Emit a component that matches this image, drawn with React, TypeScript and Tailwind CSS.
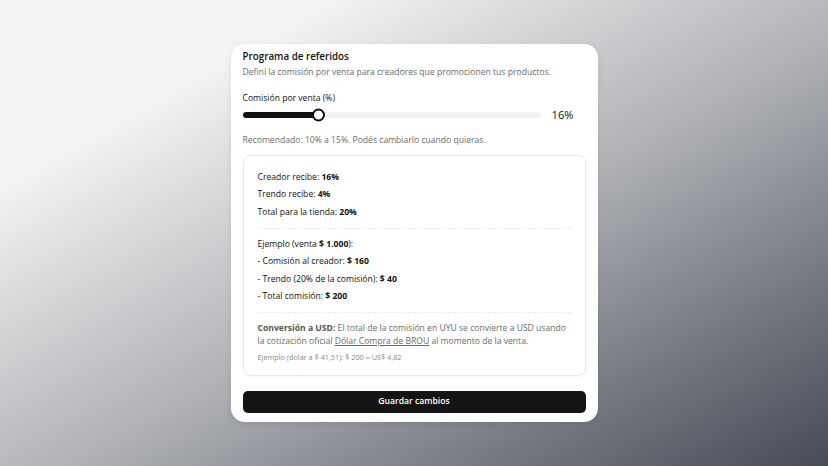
export default function App() {
  return (
    <div
      className="flex min-h-screen w-full items-center justify-center bg-gradient-to-br from-[#f3f3f3] from-20% via-[#aeb0b4] via-55% to-[#464c57]"
      style={{ fontFamily: '"Open Sans", "Noto Sans", sans-serif' }}
    >
      <ReferralCard />
    </div>
  );
}

function ReferralCard() {
  return (
    <div className="w-[367px] rounded-[14px] bg-white px-3 pt-[6px] pb-[9px] shadow-[0_2px_6px_rgba(0,0,0,0.08)]">
      <h2 className="text-[9.8px] leading-[14px] font-semibold text-[#111]">Programa de referidos</h2>
      <p className="mt-[2px] text-[8.6px] leading-[13px] text-[#6b6b6b]">
        Definí la comisión por venta para creadores que promocionen tus productos.
      </p>

      <p className="mt-[13px] text-[8.6px] leading-[13px] font-medium text-[#111]">Comisión por venta (%)</p>
      <div className="mt-[3px] flex h-[14px] items-center">
        <div className="relative h-[6px] flex-1 rounded-full bg-[#f1f1f1]">
          <div className="h-full w-[76px] rounded-full bg-[#111]" />
          <div className="absolute top-1/2 left-[69px] h-[13px] w-[13px] -translate-y-1/2 rounded-full border-2 border-[#111] bg-white" />
        </div>
        <span className="ml-[11px] w-[34px] text-[11.2px] text-[#111]">16%</span>
      </div>

      <p className="mt-[12px] text-[8.6px] leading-[13px] text-[#6b6b6b]">
        Recomendado: 10% a 15%. Podés cambiarlo cuando quieras.
      </p>

      <div className="mt-[7.5px] rounded-[8px] border border-[#e8e8e8] px-[14px] pt-[13px] pb-[13px] shadow-[0_1px_2px_rgba(0,0,0,0.04)]">
        <div className="text-[8.6px] leading-[17.5px] text-[#111]">
          <p>Creador recibe: <b className="font-bold">16%</b></p>
          <p>Trendo recibe: <b className="font-bold">4%</b></p>
          <p>Total para la tienda: <b className="font-bold">20%</b></p>
        </div>

        <div className="mt-[7px] border-t border-dashed border-[#ececec]" />

        <div className="mt-[7px] text-[8.6px] leading-[17.3px] text-[#111]">
          <p>Ejemplo (venta <b className="font-bold">$ 1.000</b>):</p>
          <p>- Comisión al creador: <b className="font-bold">$ 160</b></p>
          <p>- Trendo (20% de la comisión): <b className="font-bold">$ 40</b></p>
          <p>- Total comisión: <b className="font-bold">$ 200</b></p>
        </div>

        <div className="mt-[7px] border-t border-dashed border-[#ececec]" />

        <p className="mt-[8.5px] text-[8.6px] leading-[13px] text-[#6b6b6b]">
          <b className="font-bold text-[#555]">Conversión a USD:</b> El total de la comisión en UYU se convierte a USD
          usando la cotización oficial{' '}
          <span className="underline underline-offset-1">Dólar Compra de BROU</span> al momento de la venta.
        </p>
        <p className="mt-[4px] text-[7.3px] leading-[10px] text-[#888]">
          Ejemplo (dolar a $ 41,51): $ 200 = US$ 4,82
        </p>
      </div>

      <button className="mt-[15px] flex h-[22px] w-full items-center justify-center rounded-[5px] bg-[#141414] text-[8.6px] font-semibold text-white">
        Guardar cambios
      </button>
    </div>
  );
}
